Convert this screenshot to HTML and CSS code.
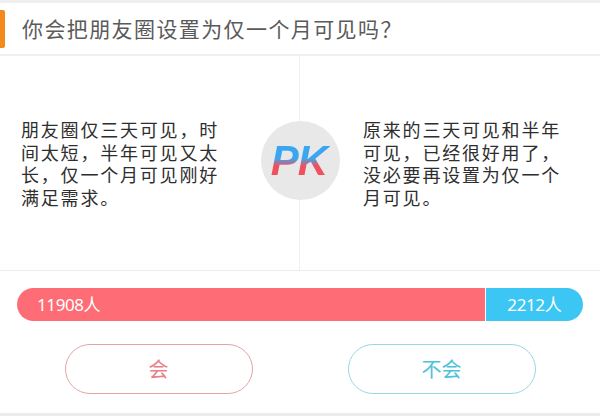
FILE: index.html
```html
<!DOCTYPE html>
<html lang="zh">
<head>
<meta charset="utf-8">
<link rel="stylesheet" href="styles.css">
</head>
<body>
<div class="page">
  <div class="top-strip"></div>
  <header class="header">
    <span class="accent"></span>
    <h1 class="title">你会把朋友圈设置为仅一个月可见吗？</h1>
  </header>
  <section class="versus">
    <div class="side side-left">
      <p class="opinion">朋友圈仅三天可见，时间太短，半年可见又太长，仅一个月可见刚好满足需求。</p>
    </div>
    <div class="side side-right">
      <p class="opinion">原来的三天可见和半年可见，已经很好用了，没必要再设置为仅一个月可见。</p>
    </div>
    <div class="pk"><span class="pk-text">PK</span></div>
  </section>
  <section class="result">
    <div class="bar">
      <div class="bar-yes" style="width: 82.8%">11908人</div>
      <div class="bar-no">2212人</div>
    </div>
  </section>
  <section class="actions">
    <button class="btn btn-yes">会</button>
    <button class="btn btn-no">不会</button>
  </section>
  <div class="bottom-strip"></div>
</div>
</body>
</html>
```

FILE: styles.css
```css
* { box-sizing: border-box; }
html, body { margin: 0; padding: 0; background: #fff; }
body {
  font-family: "Noto Sans CJK SC", "Noto Sans", sans-serif;
  width: 600px;
  height: 417px;
  overflow: hidden;
}
.page { display: flex; flex-direction: column; }
.top-strip { height: 3px; background: #efefef; }
.header {
  height: 53px;
  display: flex;
  align-items: center;
  border-bottom: 2px solid #f0f0f0;
}
.accent {
  width: 5px;
  height: 38px;
  background: #f38b1c;
  border-radius: 0 2px 2px 0;
}
.title {
  margin: 0 0 0 17px;
  font-size: 21px;
  font-weight: 400;
  color: #5a5a5a;
  letter-spacing: 1.4px;
  line-height: 1;
}
.versus {
  position: relative;
  height: 215px;
  display: grid;
  grid-template-columns: 1fr 1fr;
  border-bottom: 1px solid #ececec;
}
.side { display: flex; align-items: center; }
.side-left { padding-left: 21px; border-right: 1px solid #f0f0f0; }
.side-right { padding-left: 63px; }
.opinion {
  margin: 0;
  width: 206px;
  font-size: 18px;
  line-height: 22.5px;
  letter-spacing: 1.8px;
  color: #2e2e2e;
}
.pk {
  position: absolute;
  left: 261px;
  top: 65px;
  width: 79px;
  height: 79px;
  border-radius: 50%;
  background: #e8e8e8;
  display: flex;
  align-items: center;
  justify-content: center;
}
.pk-text {
  font-family: "Liberation Sans", Arial, sans-serif;
  font-weight: 700;
  font-style: italic;
  font-size: 42px;
  line-height: 1;
  letter-spacing: -1px;
  padding-right: 3px;
  background: linear-gradient(to bottom, #3aa6f2 0%, #3aa6f2 44%, #f0505c 62%, #f0505c 100%);
  -webkit-background-clip: text;
  background-clip: text;
  color: transparent;
}
.result { padding: 17px 17px 0; }
.bar {
  height: 33px;
  border-radius: 17px;
  overflow: hidden;
  display: flex;
  font-family: "Noto Sans", "Noto Sans CJK SC", sans-serif;
}
.bar-yes {
  background: #fe6c76;
  border-right: 1px solid #fff;
  color: #fff;
  font-size: 17px;
  line-height: 33px;
  padding-left: 20px;
  letter-spacing: -0.4px;
}
.bar-no {
  flex: 1;
  background: #3cc6f4;
  color: #fff;
  font-size: 17px;
  line-height: 33px;
  text-align: center;
  letter-spacing: -0.4px;
}
.actions {
  display: flex;
  justify-content: center;
  gap: 95px;
  padding-top: 23px;
  height: 92px;
}
.btn {
  width: 188px;
  height: 50px;
  border-radius: 25px;
  background: #fff;
  font-family: "Noto Sans CJK SC", sans-serif;
  font-size: 20px;
  line-height: 1;
  padding: 0;
}
.btn-yes { border: 1px solid #e6a2a8; color: #ea7f89; }
.btn-no { border: 1px solid #96d8e6; color: #4cc2dc; }
.bottom-strip { height: 3px; background: #ececec; }
```
